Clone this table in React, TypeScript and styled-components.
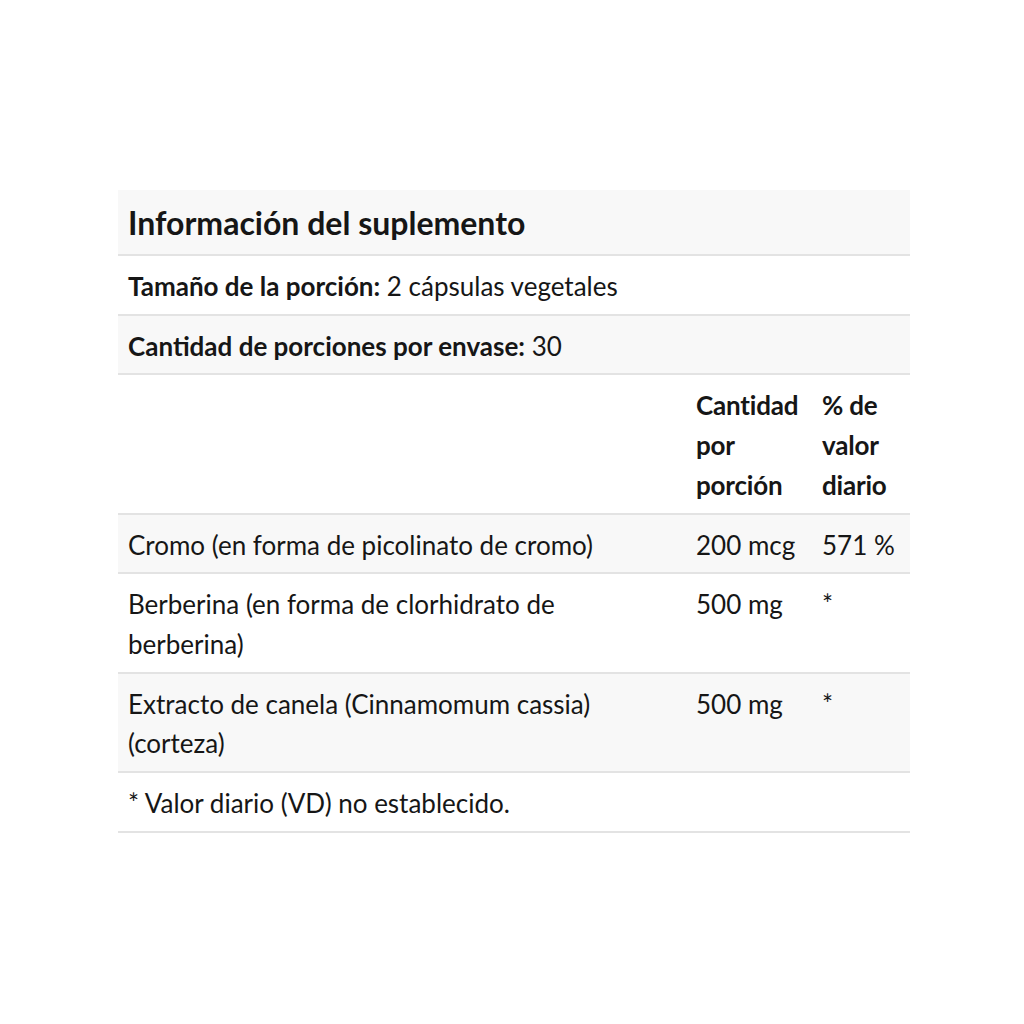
import React from "react";
import styled, { createGlobalStyle } from "styled-components";

const Global = createGlobalStyle`
  html, body { margin: 0; padding: 0; background: #ffffff; }
  body { font-family: Lato, "Open Sans", sans-serif; color: #161616; }
`;

const Page = styled.div`
  width: 1024px;
  height: 1024px;
  box-sizing: border-box;
  padding: 190px 114px 0 118px;
`;

const Table = styled.table`
  width: 792px;
  border-collapse: collapse;
  table-layout: fixed;
  font-family: Lato, sans-serif;
  font-size: 26px;
  line-height: 39.7px;
  color: #161616;
`;

const Row = styled.tr<{ $shaded?: boolean }>`
  background: ${(p) => (p.$shaded ? "#f8f8f8" : "#ffffff")};
  border-bottom: 2px solid #e3e3e3;
`;

const Cell = styled.td<{ $bold?: boolean }>`
  padding: 11px 2px 7px 10px;
  vertical-align: top;
  font-weight: ${(p) => (p.$bold ? 700 : 400)};
  letter-spacing: ${(p) => (p.$bold ? "-0.2px" : "0")};
`;

const NameCell = styled(Cell)`
  padding-right: 24px;
`;

const TitleCell = styled.td`
  padding: 13px 10px 11px 10px;
  font-size: 32px;
  font-weight: 700;
  line-height: 40px;
  letter-spacing: 0;
`;

const Strong = styled.strong`
  font-weight: 700;
`;

const rows = [
  {
    name: "Cromo (en forma de picolinato de cromo)",
    amount: "200 mcg",
    dv: "571 %",
  },
  {
    name: "Berberina (en forma de clorhidrato de berberina)",
    amount: "500 mg",
    dv: "*",
  },
  {
    name: "Extracto de canela (Cinnamomum cassia) (corteza)",
    amount: "500 mg",
    dv: "*",
  },
];

export default function App() {
  return (
    <>
      <Global />
      <Page>
        <Table>
          <colgroup>
            <col style={{ width: 568 }} />
            <col style={{ width: 126 }} />
            <col style={{ width: 98 }} />
          </colgroup>
          <tbody>
            <Row $shaded>
              <TitleCell colSpan={3}>Información del suplemento</TitleCell>
            </Row>
            <Row>
              <Cell colSpan={3}>
                <Strong>Tamaño de la porción:</Strong> 2 cápsulas vegetales
              </Cell>
            </Row>
            <Row $shaded>
              <Cell colSpan={3}>
                <Strong>Cantidad de porciones por envase:</Strong> 30
              </Cell>
            </Row>
            <Row>
              <NameCell />
              <Cell $bold>Cantidad por porción</Cell>
              <Cell $bold>% de valor diario</Cell>
            </Row>
            {rows.map((r, i) => (
              <Row key={r.name} $shaded={i % 2 === 0}>
                <NameCell>{r.name}</NameCell>
                <Cell>{r.amount}</Cell>
                <Cell>{r.dv}</Cell>
              </Row>
            ))}
            <Row>
              <Cell colSpan={3}>* Valor diario (VD) no establecido.</Cell>
            </Row>
          </tbody>
        </Table>
      </Page>
    </>
  );
}
